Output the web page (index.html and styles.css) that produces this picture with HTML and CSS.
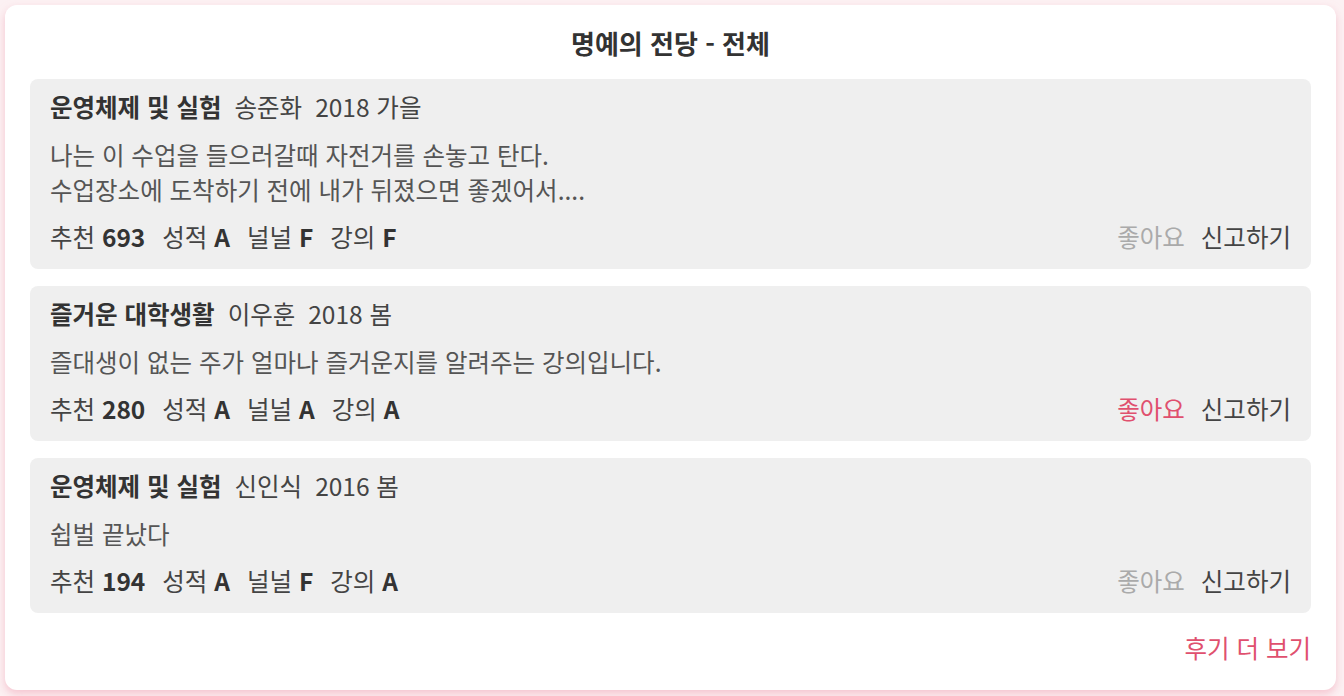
FILE: index.html
```html
<!DOCTYPE html>
<html lang="ko">

<head>
    <meta charset="utf-8">
    <title>명예의 전당</title>
    <link rel="stylesheet" href="styles.css">
</head>

<body>
    <div class="board">
        <h2 class="board-title">명예의 전당 - 전체</h2>

        <div class="review">
            <div class="review-head">
                <b>운영체제 및 실험</b>
                <span>송준화</span>
                <span>2018 가을</span>
            </div>
            <p class="review-body">나는 이 수업을 들으러갈때 자전거를 손놓고 탄다.<br>수업장소에 도착하기 전에 내가 뒤졌으면 좋겠어서....</p>
            <div class="review-foot">
                <div class="scores">
                    <span>추천 <b>693</b></span>
                    <span>성적 <b>A</b></span>
                    <span>널널 <b>F</b></span>
                    <span>강의 <b>F</b></span>
                </div>
                <div class="actions">
                    <a class="like">좋아요</a>
                    <a class="report">신고하기</a>
                </div>
            </div>
        </div>

        <div class="review">
            <div class="review-head">
                <b>즐거운 대학생활</b>
                <span>이우훈</span>
                <span>2018 봄</span>
            </div>
            <p class="review-body">즐대생이 없는 주가 얼마나 즐거운지를 알려주는 강의입니다.</p>
            <div class="review-foot">
                <div class="scores">
                    <span>추천 <b>280</b></span>
                    <span>성적 <b>A</b></span>
                    <span>널널 <b>A</b></span>
                    <span>강의 <b>A</b></span>
                </div>
                <div class="actions">
                    <a class="like liked">좋아요</a>
                    <a class="report">신고하기</a>
                </div>
            </div>
        </div>

        <div class="review">
            <div class="review-head">
                <b>운영체제 및 실험</b>
                <span>신인식</span>
                <span>2016 봄</span>
            </div>
            <p class="review-body">쉽벌 끝났다</p>
            <div class="review-foot">
                <div class="scores">
                    <span>추천 <b>194</b></span>
                    <span>성적 <b>A</b></span>
                    <span>널널 <b>F</b></span>
                    <span>강의 <b>A</b></span>
                </div>
                <div class="actions">
                    <a class="like">좋아요</a>
                    <a class="report">신고하기</a>
                </div>
            </div>
        </div>

        <div class="more">
            <a>후기 더 보기</a>
        </div>
    </div>
</body>

</html>
```

FILE: styles.css
```css
:root {
    --page-background: #fcf1f3;
    --card-background: #fff;
    --item-background: #efefef;
    --text-color: #333;
    --muted-color: #aaa;
    --accent-color: #e0506e;
}

body {
    margin: 0;
    padding: 5px 8px 9px 5px;
    background-color: var(--page-background);
    color: var(--text-color);
    font-family: "Noto Sans CJK KR", "Noto Sans", sans-serif;
    font-size: 24.5px;
}

.board {
    background-color: var(--card-background);
    border-radius: 12px;
    padding: 20px 25px 24px;
    box-shadow: 0 4px 8px rgba(240, 160, 178, 0.55);
}

.board-title {
    margin: 0 0 18px;
    text-align: center;
    font-size: 26px;
    font-weight: bold;
    line-height: 36px;
}

.review {
    background-color: var(--item-background);
    border-radius: 8px;
    padding: 10px 20px 14px;
    margin-bottom: 17px;
}

.review:last-of-type {
    margin-bottom: 0;
}

.review-head {
    line-height: 36px;
    display: flex;
    gap: 13px;
}

.review-head span {
    color: #444;
}

.review-body {
    margin: 12px 0;
    line-height: 35px;
    color: #555;
}

.review-foot {
    display: flex;
    justify-content: space-between;
    line-height: 36px;
}

.scores {
    display: flex;
    gap: 17px;
    color: #444;
}

.scores b {
    color: var(--text-color);
}

.actions {
    display: flex;
    gap: 16px;
}

.like {
    color: var(--muted-color);
    cursor: pointer;
}

.like.liked {
    color: var(--accent-color);
}

.report {
    color: #444;
    cursor: pointer;
}

.more {
    text-align: right;
    margin-top: 13px;
    line-height: 36px;
}

.more a {
    color: var(--accent-color);
    cursor: pointer;
}
```
